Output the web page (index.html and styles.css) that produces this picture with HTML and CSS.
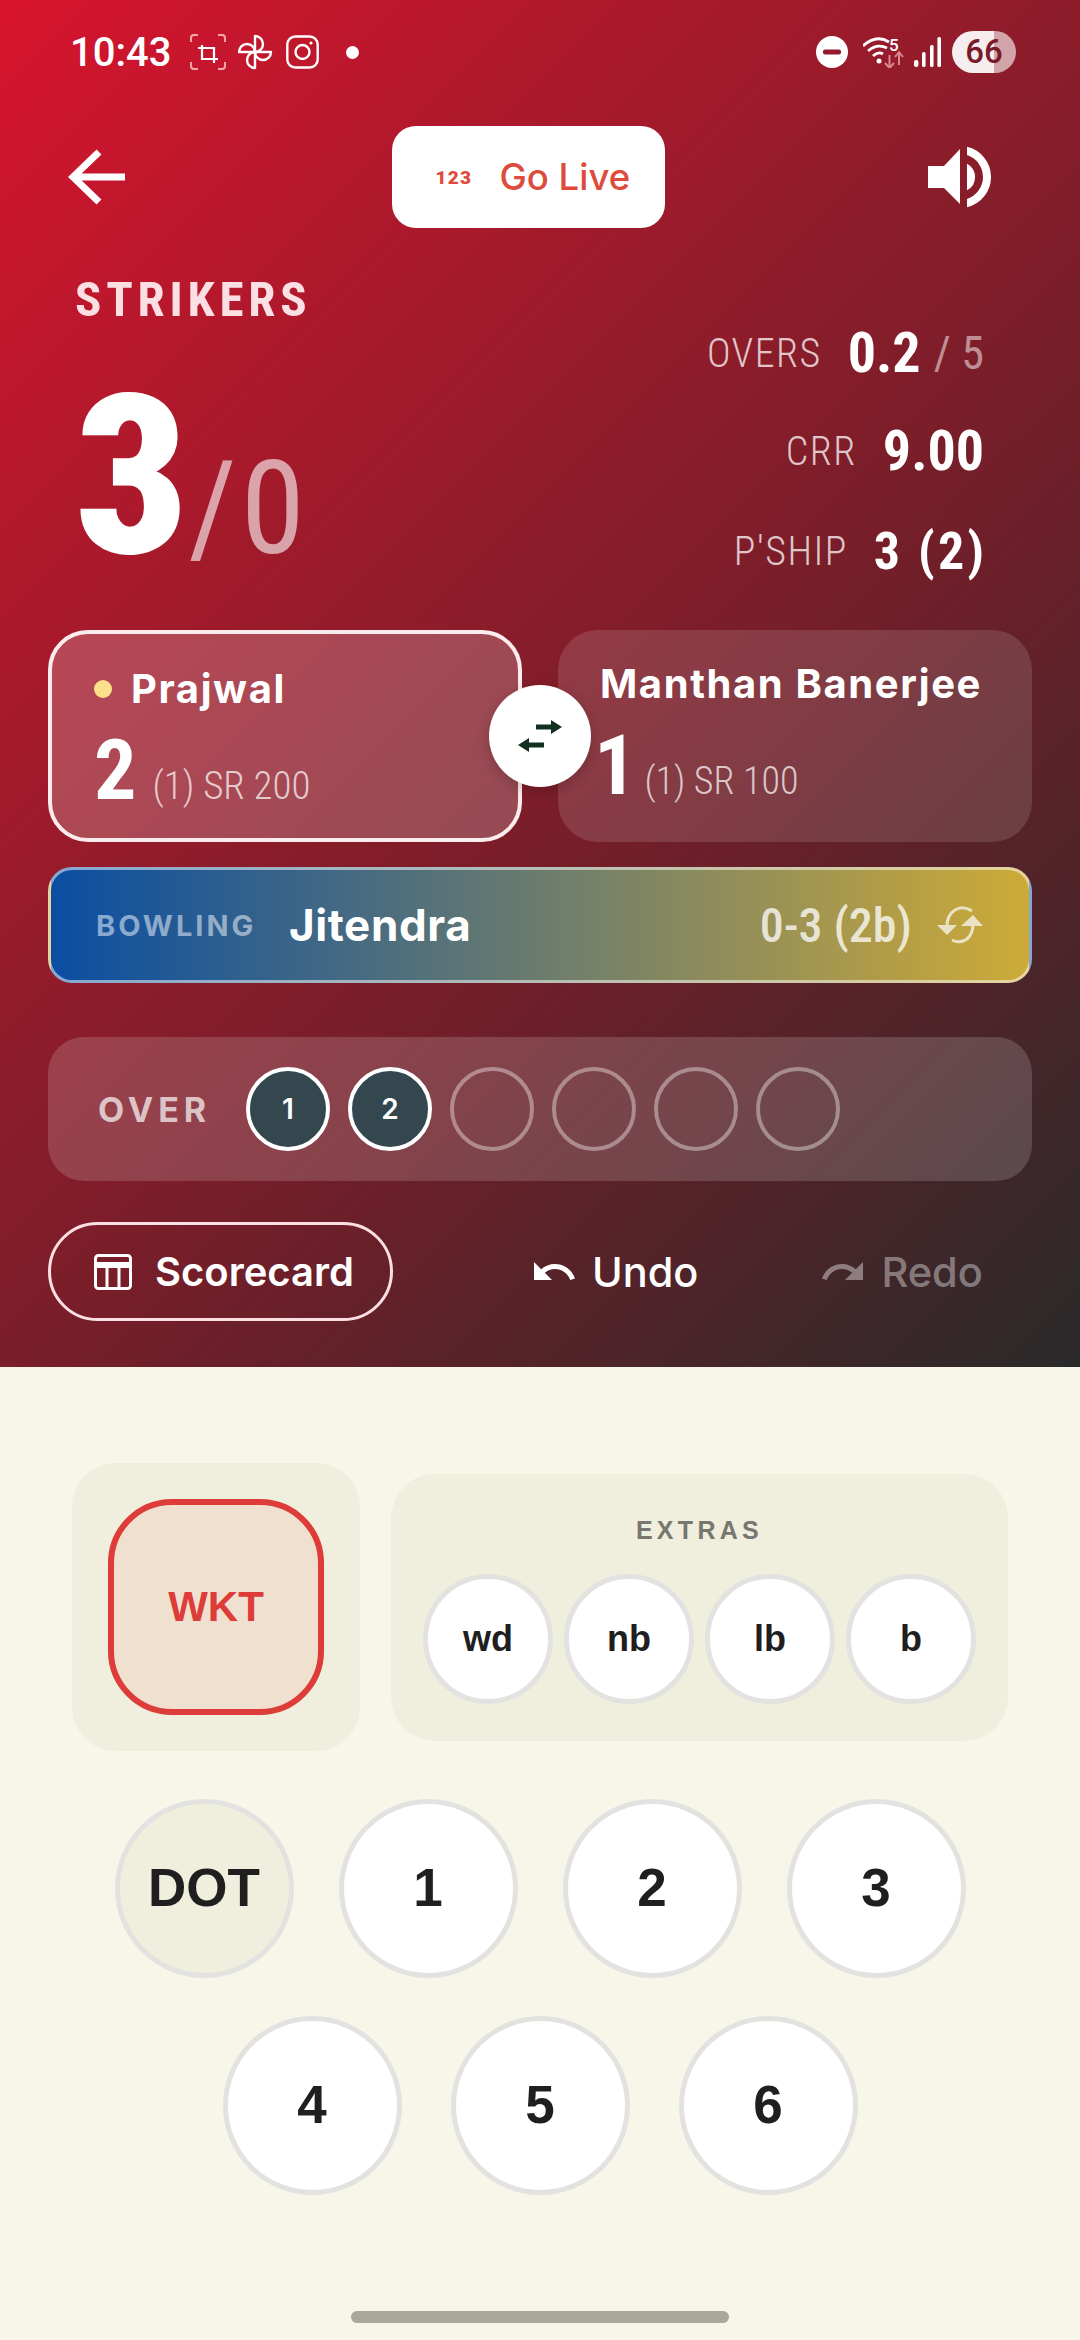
FILE: index.html
```html
<!DOCTYPE html>
<html lang="en">

<head>
    <meta charset="UTF-8">
    <meta name="viewport" content="width=device-width, initial-scale=1.0">
    <title>Live Scoring</title>
    <link rel="stylesheet" href="styles.css">
</head>

<body>

    <div class="screen">
        <section class="score-panel">

            <div class="status-bar">
                <div class="status-left">
                    <span class="clock">10:43</span>
                    <svg class="st-crop" viewBox="0 0 36 36" fill="none">
                        <path d="M1 8V4Q1 1 4 1H8M28 1H32Q35 1 35 4V8M35 28V32Q35 35 32 35H28M8 35H4Q1 35 1 32V28" stroke="#f7a6ae" stroke-width="2"/>
                        <path d="M12 11V25H28M8 14H24V29" stroke="#fff" stroke-width="2.2"/>
                    </svg>
                    <svg class="st-fan" viewBox="0 0 36 36" fill="none" stroke="#fff" stroke-width="2.4" stroke-linejoin="round">
                        <path d="M18 18V2A8 8 0 0 1 18 18Z"/>
                        <path d="M18 18V2A8 8 0 0 1 18 18Z" transform="rotate(90 18 18)"/>
                        <path d="M18 18V2A8 8 0 0 1 18 18Z" transform="rotate(180 18 18)"/>
                        <path d="M18 18V2A8 8 0 0 1 18 18Z" transform="rotate(270 18 18)"/>
                    </svg>
                    <svg class="st-insta" viewBox="0 0 33 34" fill="none" stroke="#fff" stroke-width="2.4">
                        <rect x="1.300" y="1.500" width="30.400" height="31" rx="8"/>
                        <circle cx="16.500" cy="17" r="7"/>
                        <circle cx="25" cy="8" r="1.600" fill="#fff" stroke="none"/>
                    </svg>
                    <span class="st-dot"></span>
                </div>
                <div class="status-right">
                    <svg class="st-dnd" viewBox="0 0 32 32">
                        <circle cx="16" cy="16" r="16" fill="#fff"/>
                        <rect x="7" y="13.500" width="18" height="5" rx="2" fill="#8f1b2c"/>
                    </svg>
                    <svg class="st-wifi" viewBox="0 0 41 32" fill="none">
                        <path d="M0 10Q13 -2 26 6M5 15Q14 7 24 12M10 20Q15 15 20 18" stroke="#fff" stroke-width="2.800"/>
                        <circle cx="16" cy="25" r="2.500" fill="#fff"/>
                        <path d="M26.500 19V32M22 27L26.500 32L31 27" stroke="#d98791" stroke-width="2"/>
                        <path d="M36 29V17M32 21L36 16L40 21" stroke="#d98791" stroke-width="2"/>
                        <text x="26" y="15" class="wifi-five">5</text>
                    </svg>
                    <svg class="st-signal" viewBox="0 0 27 30" fill="#fff">
                        <rect x="0" y="23" width="4.400" height="7" rx="2"/>
                        <rect x="8" y="15" width="3.600" height="15" rx="1.500"/>
                        <rect x="16" y="8" width="3.600" height="22" rx="1.500"/>
                        <rect x="23.400" y="0" width="3.600" height="30" rx="1.500"/>
                    </svg>
                    <span class="battery">66</span>
                </div>
            </div>

            <div class="top-bar">
                <svg class="back-icon" viewBox="0 0 57 56" fill="none" stroke="#fff" stroke-width="7">
                    <path d="M57 28H5M31 3L5 28L31 53"/>
                </svg>
                <div class="live-btn">
                    <span class="live-logo">123</span>
                    <span class="live-text">Go Live</span>
                </div>
                <svg class="sound-icon" viewBox="0 0 63 62" fill="#fff">
                    <path d="M0 20H16L32 3V58L16 42H0Z"/>
                    <path d="M39 .8A31 31 0 0 1 39 61.200V52.900A23 23 0 0 0 39 9.100Z"/>
                    <path d="M39 17.700A15 15 0 0 1 39 44.300Z"/>
                </svg>
            </div>

            <div class="score-row">
                <div class="team">
                    <div class="team-name">STRIKERS</div>
                    <div class="team-score">3<span class="wkts">/0</span></div>
                </div>
                <div class="stats">
                    <div class="stat stat-overs"><span class="stat-label">OVERS</span><span class="stat-value">0.2</span><span class="stat-total">/ 5</span></div>
                    <div class="stat stat-crr"><span class="stat-label">CRR</span><span class="stat-value">9.00</span></div>
                    <div class="stat stat-pship"><span class="stat-label">P'SHIP</span><span class="stat-value pship-value">3 (2)</span></div>
                </div>
            </div>

            <div class="players">
                <div class="player player-on">
                    <div class="player-name"><span class="strike-dot"></span>Prajwal</div>
                    <div class="player-line"><span class="player-runs">2</span><span class="player-info">(1) SR 200</span></div>
                </div>
                <div class="player player-off">
                    <div class="player-name">Manthan Banerjee</div>
                    <div class="player-line"><span class="player-runs">1</span><span class="player-info">(1) SR 100</span></div>
                </div>
                <div class="swap">
                    <svg viewBox="0 0 44 32" fill="#12301f">
                        <path d="M18 4.500H33V0L44 7L33 14V9.500H18Z"/>
                        <path d="M26 22.500H11V18L0 25L11 32V27.500H26Z"/>
                    </svg>
                </div>
            </div>

            <div class="bowling">
                <span class="bowling-label">BOWLING</span>
                <span class="bowling-name">Jitendra</span>
                <span class="bowling-figures">0-3 (2b)</span>
                <svg class="bowling-change" viewBox="0 0 48 38" fill="none" stroke="#e9e2c4" stroke-width="3">
                    <path d="M36 5Q27 -1 19 4Q11 9 11 20"/>
                    <path d="M1 19H21L11 29Z" fill="#e9e2c4" stroke="none"/>
                    <path d="M16 34Q24 38 31 33Q37 28 37 18"/>
                    <path d="M25 20H47L37 9Z" fill="#e9e2c4" stroke="none"/>
                </svg>
            </div>

            <div class="over-box">
                <span class="over-label">OVER</span>
                <div class="balls">
                    <span class="ball ball-done">1</span>
                    <span class="ball ball-done">2</span>
                    <span class="ball"></span>
                    <span class="ball"></span>
                    <span class="ball"></span>
                    <span class="ball"></span>
                </div>
            </div>

            <div class="actions">
                <div class="scorecard-btn">
                    <svg viewBox="0 0 38 36" fill="none" stroke="#fff" stroke-width="3">
                        <rect x="1.500" y="1.500" width="35" height="33" rx="3"/>
                        <path d="M1.500 11H36.500" stroke-width="6"/>
                        <path d="M13 12V34M25 12V34"/>
                    </svg>
                    <span>Scorecard</span>
                </div>
                <div class="action-link link-undo">
                    <svg viewBox="0 0 24 24" fill="#fff"><path d="M12.500 8c-2.650 0-5.050.99-6.900 2.600L2 7v9h9l-3.620-3.620c1.390-1.160 3.160-1.880 5.120-1.880 3.540 0 6.550 2.310 7.600 5.500l2.370-.78C21.080 11.030 17.150 8 12.500 8z"/></svg>
                    <span>Undo</span>
                </div>
                <div class="action-link link-redo">
                    <svg viewBox="0 0 24 24" fill="#fff"><path d="M18.400 10.600C16.550 8.990 14.150 8 11.500 8c-4.650 0-8.580 3.030-9.970 7.220L3.900 16c1.050-3.190 4.050-5.500 7.600-5.500 1.950 0 3.730.72 5.120 1.880L13 16h9V7l-3.600 3.600z"/></svg>
                    <span>Redo</span>
                </div>
            </div>
        </section>

        <section class="entry-panel">
            <div class="entry-top">
                <div class="wkt-box">
                    <div class="wkt-btn">WKT</div>
                </div>
                <div class="extras-box">
                    <div class="extras-title">EXTRAS</div>
                    <div class="extras-row">
                        <span class="extra">wd</span>
                        <span class="extra">nb</span>
                        <span class="extra">lb</span>
                        <span class="extra">b</span>
                    </div>
                </div>
            </div>

            <div class="runs-row runs-first">
                <span class="run run-dot">DOT</span>
                <span class="run">1</span>
                <span class="run">2</span>
                <span class="run">3</span>
            </div>
            <div class="runs-row runs-second">
                <span class="run">4</span>
                <span class="run">5</span>
                <span class="run">6</span>
            </div>

            <div class="home-bar"></div>
        </section>
    </div>

</body>

</html>
```

FILE: styles.css
```css
* {
    box-sizing: border-box;
}

body {
    margin: 0;
    font-family: Roboto, sans-serif;
    color: #fff;
}

.screen {
    width: 1080px;
    height: 2340px;
    overflow: hidden;
    background: #f8f6e9;
}

.score-panel {
    height: 1367px;
    background: linear-gradient(135deg, #d8142e 0%, #a51a2b 30%, #6f1f29 62%, #2a2a2a 100%);
}

/* status bar */
.status-bar {
    height: 104px;
    padding: 0 64px 0 70px;
    display: flex;
    justify-content: space-between;
    align-items: center;
}

.status-left,
.status-right {
    display: flex;
    align-items: center;
}

.clock {
    font-size: 40px;
    font-weight: 500;
}

.st-crop {
    width: 36px;
    height: 36px;
    margin-left: 19px;
}

.st-fan {
    width: 36px;
    height: 36px;
    margin-left: 11px;
}

.st-insta {
    width: 33px;
    height: 34px;
    margin-left: 13px;
}

.st-dot {
    width: 13px;
    height: 13px;
    margin-left: 27px;
    border-radius: 50%;
    background: #fff;
}

.st-dnd {
    width: 32px;
    height: 32px;
}

.st-wifi {
    width: 41px;
    height: 32px;
    margin-left: 15px;
}

.wifi-five {
    font-family: Roboto, sans-serif;
    font-size: 17px;
    font-weight: 500;
    fill: #fff;
}

.st-signal {
    width: 27px;
    height: 30px;
    margin-left: 10px;
}

.battery {
    width: 64px;
    height: 42px;
    margin-left: 11px;
    border-radius: 21px;
    background: linear-gradient(90deg, rgba(255, 255, 255, .92) 65%, rgba(255, 255, 255, .6) 65%);
    color: #7c1a2b;
    font-size: 33px;
    font-weight: 500;
    line-height: 42px;
    text-align: center;
}

/* top bar */
.top-bar {
    height: 102px;
    margin-top: 22px;
    display: grid;
    grid-template-columns: 323.5px 273.5px 1fr;
    padding: 0 89px 0 68px;
    align-items: center;
}

.back-icon {
    width: 57px;
    height: 56px;
}

.live-btn {
    height: 102px;
    border-radius: 24px;
    background: #fff;
    display: flex;
    align-items: center;
    padding-left: 44px;
    color: #de4a3b;
}

.live-logo {
    width: 64px;
    font-size: 19px;
    font-weight: 900;
    letter-spacing: 1.2px;
}

.live-text {
    font-family: Inter, sans-serif;
    font-size: 36.5px;
    font-weight: 500;
}

.sound-icon {
    width: 63px;
    height: 62px;
    justify-self: end;
}

/* score */
.score-row {
    height: 402px;
    display: flex;
    justify-content: space-between;
    padding: 0 96px 0 75px;
    font-family: "Roboto Condensed", Roboto, sans-serif;
}

.team-name {
    margin-top: 50px;
    font-size: 49px;
    line-height: 44px;
    font-weight: 700;
    letter-spacing: 4.800px;
    color: #fbdfe3;
}

.team-score {
    margin-top: 44px;
    font-size: 222px;
    line-height: 222px;
    font-weight: 900;
    letter-spacing: -3px;
}

.wkts {
    margin-left: 3px;
    font-size: 130px;
    font-weight: 400;
    letter-spacing: 4px;
    color: rgba(255, 255, 255, .6);
}

.stats {
    display: flex;
    flex-direction: column;
    align-items: flex-end;
}

.stat {
    display: flex;
    align-items: center;
    height: 64px;
}

.stat-overs {
    margin-top: 93px;
}

.stat-crr {
    margin-top: 34px;
}

.stat-pship {
    margin-top: 36px;
}

.stat-label {
    margin-right: 26px;
    font-size: 40px;
    font-weight: 300;
    letter-spacing: 1.500px;
    color: rgba(255, 255, 255, .75);
}

.stat-value {
    font-size: 56px;
    font-weight: 700;
}

.stat-total {
    margin-left: 13px;
    font-size: 46px;
    color: rgba(255, 255, 255, .5);
}

.pship-value {
    margin-right: -3px;
    font-size: 52px;
    letter-spacing: 3px;
}

/* batters */
.players {
    position: relative;
    margin: 0 48px;
    display: flex;
    justify-content: space-between;
    height: 212px;
}

.player {
    width: 474px;
    border-radius: 40px;
}

.player-on {
    border: 4px solid #fdecee;
    padding: 31px 42px;
    background: rgba(255, 255, 255, .2);
}

.player-off {
    padding: 30px 42px;
    background: rgba(255, 255, 255, .13);
}

.player-name {
    display: flex;
    align-items: center;
    font-family: Inter, sans-serif;
    font-size: 40px;
    line-height: 48px;
    font-weight: 700;
    letter-spacing: 1.600px;
}

.strike-dot {
    width: 18px;
    height: 18px;
    margin-right: 19px;
    border-radius: 50%;
    background: #fde08a;
}

.player-line {
    display: flex;
    align-items: baseline;
    margin-top: 16px;
    font-family: "Roboto Condensed", Roboto, sans-serif;
}

.player-runs {
    font-size: 84px;
    line-height: 84px;
    font-weight: 700;
}

.player-info {
    margin-left: 16px;
    font-size: 39px;
    font-weight: 300;
    color: rgba(255, 255, 255, .72);
}

.player-off .player-runs {
    margin-left: -6px;
}

.player-off .player-info {
    margin-left: 8px;
    font-size: 38px;
}

.swap {
    position: absolute;
    left: 441px;
    top: 55px;
    width: 102px;
    height: 102px;
    border-radius: 50%;
    background: #fff;
    box-shadow: 0 4px 14px rgba(0, 0, 0, .2);
    display: flex;
    align-items: center;
    justify-content: center;
}

.swap svg {
    width: 44px;
    height: 32px;
}

/* bowler */
.bowling {
    height: 116px;
    margin: 25px 48px 0;
    padding: 0 45px;
    border: 3px solid rgba(255, 255, 255, .5);
    border-radius: 24px;
    background: linear-gradient(90deg, #0a4ea3, #cdaa38);
    display: flex;
    align-items: center;
}

.bowling-label {
    width: 193px;
    font-family: Inter, sans-serif;
    font-size: 29px;
    font-weight: 700;
    letter-spacing: 3px;
    color: rgba(255, 255, 255, .5);
}

.bowling-name {
    font-family: Inter, sans-serif;
    font-size: 44px;
    font-weight: 700;
    letter-spacing: .6px;
}

.bowling-figures {
    margin-left: auto;
    font-family: "Roboto Condensed", Roboto, sans-serif;
    font-size: 48px;
    font-weight: 500;
    color: rgba(255, 255, 255, .75);
}

.bowling-change {
    width: 48px;
    height: 38px;
    margin-left: 24px;
}

/* over */
.over-box {
    height: 144px;
    margin: 54px 48px 0;
    padding-left: 50px;
    border-radius: 36px;
    background: rgba(255, 255, 255, .16);
    display: flex;
    align-items: center;
}

.over-label {
    width: 148px;
    font-family: Inter, sans-serif;
    font-size: 34px;
    font-weight: 700;
    letter-spacing: 5px;
    color: rgba(255, 255, 255, .7);
}

.balls {
    display: flex;
    gap: 18px;
}

.ball {
    width: 84px;
    height: 84px;
    border: 4px solid rgba(255, 255, 255, .38);
    border-radius: 50%;
    display: flex;
    align-items: center;
    justify-content: center;
    font-family: Inter, sans-serif;
    font-size: 28px;
    font-weight: 600;
}

.ball-done {
    border-color: #fff;
    background: #34474f;
}

/* actions */
.actions {
    margin: 41px 48px 0;
    height: 99px;
    display: flex;
    align-items: center;
}

.scorecard-btn {
    width: 345px;
    height: 99px;
    padding-left: 43px;
    border: 3px solid #fbdfe3;
    border-radius: 50px;
    display: flex;
    align-items: center;
    gap: 23px;
    font-family: Inter, sans-serif;
    font-size: 40px;
    font-weight: 600;
}

.scorecard-btn svg {
    width: 38px;
    height: 36px;
}

.action-link {
    display: flex;
    align-items: center;
    gap: 14px;
    font-family: Inter, sans-serif;
    font-size: 41.5px;
    font-weight: 500;
}

.action-link svg {
    width: 48px;
    height: 48px;
}

.link-undo {
    margin-left: 137px;
}

.link-redo {
    margin-left: 121px;
    color: rgba(255, 255, 255, .4);
}

.link-redo svg {
    opacity: .4;
}

/* scoring buttons */
.entry-panel {
    color: #1f1f1f;
    font-family: "Liberation Sans", Arial, sans-serif;
    font-weight: 700;
}

.entry-top {
    padding: 96px 72px 0;
    display: flex;
    align-items: center;
    justify-content: space-between;
}

.wkt-box {
    width: 288px;
    height: 288px;
    border-radius: 44px;
    background: #f0eedd;
    display: flex;
    align-items: center;
    justify-content: center;
}

.wkt-btn {
    width: 216px;
    height: 216px;
    border: 6px solid #dd3c38;
    border-radius: 64px;
    background: #f0e0d0;
    color: #dd3c38;
    font-size: 42px;
    display: flex;
    align-items: center;
    justify-content: center;
}

.extras-box {
    width: 617px;
    height: 267px;
    border-radius: 44px;
    background: #f0eedd;
    padding-top: 41px;
}

.extras-title {
    font-size: 25px;
    line-height: 30px;
    letter-spacing: 4.300px;
    text-align: center;
    color: #777770;
}

.extras-row {
    margin-top: 29px;
    display: flex;
    justify-content: center;
    gap: 11px;
}

.extra {
    width: 130px;
    height: 130px;
    border: 5px solid #e2e2e0;
    border-radius: 50%;
    background: #fff;
    font-size: 36px;
    display: flex;
    align-items: center;
    justify-content: center;
}

.runs-row {
    display: flex;
    justify-content: center;
}

.runs-first {
    margin-top: 48px;
    gap: 45px;
}

.runs-second {
    margin-top: 38px;
    gap: 49px;
}

.run {
    width: 179px;
    height: 179px;
    padding-bottom: 3px;
    border: 5px solid #e2e2e0;
    border-radius: 50%;
    background: #fff;
    font-size: 53px;
    display: flex;
    align-items: center;
    justify-content: center;
}

.run-dot {
    background: #f0eedd;
}

.home-bar {
    width: 378px;
    height: 12px;
    margin: 116px auto 0;
    border-radius: 6px;
    background: #aaa89a;
}
```
